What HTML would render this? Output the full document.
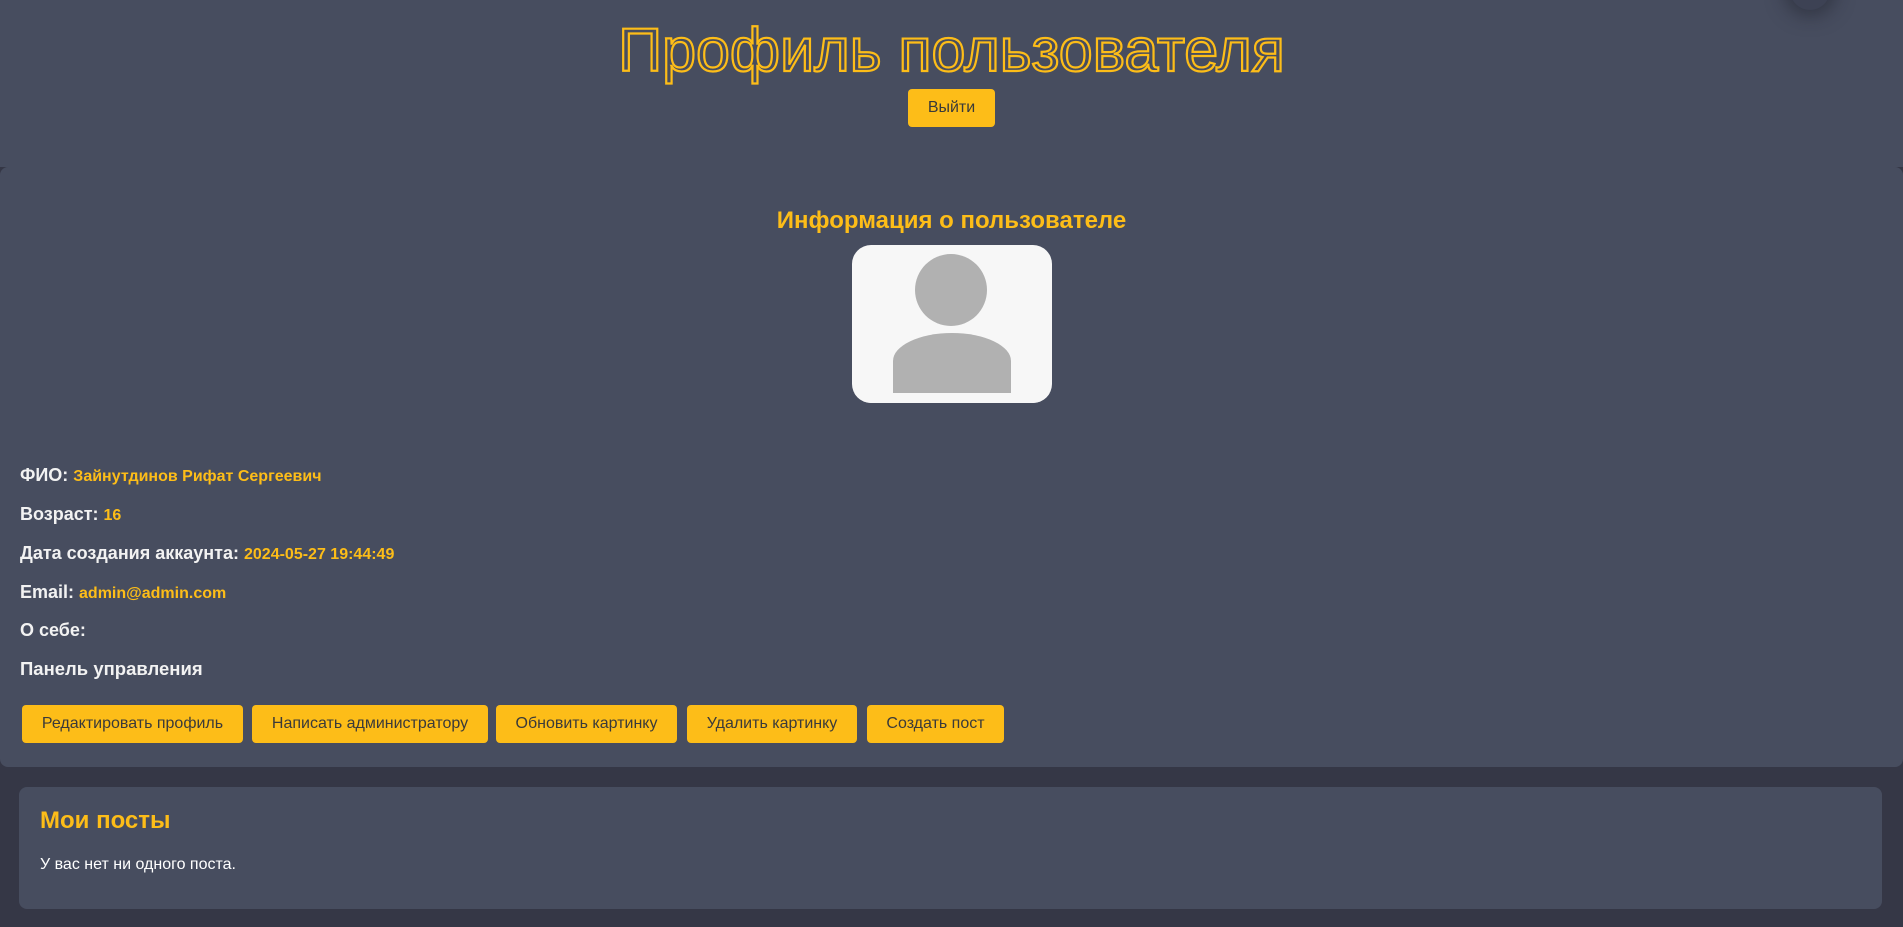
<!DOCTYPE html>
<html><head><meta charset="utf-8"><style>
*{margin:0;padding:0;box-sizing:border-box}
body{width:1903px;height:927px;background:#353746;font-family:"Liberation Sans",Arial,sans-serif;position:relative;overflow:hidden}
.hdr{position:absolute;left:0;top:0;width:1903px;height:167px;background:#474d5f}
.title{position:absolute;left:0;width:1903px;top:15px;text-align:center;font-size:61px;color:transparent;-webkit-text-stroke:2.2px #fdbd18;font-weight:normal}
.btn{position:absolute;background:#fdbd18;color:#3a3a3a;border-radius:4px;font-size:16px;display:flex;align-items:center;justify-content:center;height:38px}
.card{position:absolute;left:0;top:167px;width:1903px;height:600px;background:#474d5f;border-radius:8px}
.h2{position:absolute;left:0;width:1903px;top:207px;text-align:center;font-size:24px;font-weight:bold;color:#fdbd18}
.av{position:absolute;left:852px;top:245px;width:200px;height:158px;background:#f7f7f7;border-radius:19px;overflow:hidden}
.line{position:absolute;left:20px;font-size:18px;font-weight:bold;color:#f2f2f2}
.line span{color:#fdbd18;font-size:16px}
.posts{position:absolute;left:19px;top:787px;width:1863px;height:122px;background:#474d5f;border-radius:8px}
</style></head><body>
<div class="hdr"></div>
<div style="position:absolute;left:1790px;top:-30px;width:40px;height:40px;border-radius:50%;background:#3d4254;box-shadow:0 0 18px 6px rgba(30,32,42,.5)"></div>
<div class="title">Профиль пользователя</div>
<div class="btn" style="left:908px;top:89px;width:87px">Выйти</div>
<div class="card"></div>
<div class="h2">Информация о пользователе</div>
<div class="av">
<div style="position:absolute;left:63px;top:9px;width:72px;height:72px;border-radius:50%;background:#b1b1b1"></div>
<div style="position:absolute;left:41px;top:88px;width:118px;height:72px;border-radius:59px 59px 0 0/28px 28px 0 0;background:#b1b1b1"></div>
<div style="position:absolute;left:0;top:148px;width:200px;height:10px;background:#f7f7f7"></div>
</div>
<div class="line" style="top:465px">ФИО: <span>Зайнутдинов Рифат Сергеевич</span></div>
<div class="line" style="top:504px">Возраст: <span>16</span></div>
<div class="line" style="top:543px">Дата создания аккаунта: <span>2024-05-27 19:44:49</span></div>
<div class="line" style="top:582px">Email: <span>admin@admin.com</span></div>
<div class="line" style="top:620px">О себе:</div>
<div class="line" style="top:658px;font-size:18.5px">Панель управления</div>
<div class="btn" style="left:22px;top:705px;width:221px">Редактировать профиль</div>
<div class="btn" style="left:252px;top:705px;width:236px">Написать администратору</div>
<div class="btn" style="left:496px;top:705px;width:181px">Обновить картинку</div>
<div class="btn" style="left:687px;top:705px;width:170px">Удалить картинку</div>
<div class="btn" style="left:867px;top:705px;width:137px">Создать пост</div>
<div class="posts"></div>
<div style="position:absolute;left:40px;top:807px;font-size:24px;font-weight:bold;color:#fdbd18">Мои посты</div>
<div style="position:absolute;left:40px;top:856px;font-size:16px;color:#fff">У вас нет ни одного поста.</div>
</body></html>
